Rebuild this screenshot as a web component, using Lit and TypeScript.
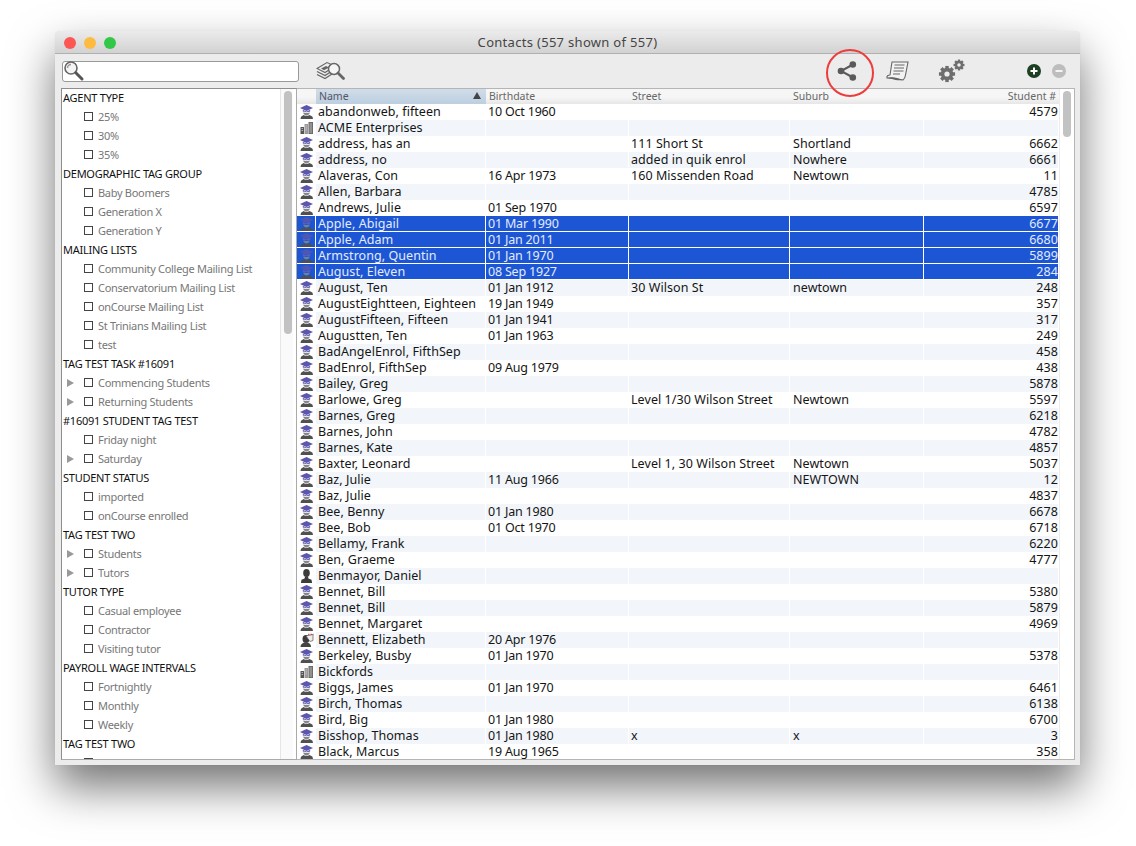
import { LitElement, html, css, svg, nothing } from "lit";
import { customElement } from "lit/decorators.js";

type Kind = "s" | "o" | "p" | "t";
type Contact = [Kind, string, string, string, string, string];

const CONTACTS: Contact[] = [
  ["s", "abandonweb, fifteen", "10 Oct 1960", "", "", "4579"],
  ["o", "ACME Enterprises", "", "", "", ""],
  ["s", "address, has an", "", "111 Short St", "Shortland", "6662"],
  ["s", "address, no", "", "added in quik enrol", "Nowhere", "6661"],
  ["s", "Alaveras, Con", "16 Apr 1973", "160 Missenden Road", "Newtown", "11"],
  ["s", "Allen, Barbara", "", "", "", "4785"],
  ["s", "Andrews, Julie", "01 Sep 1970", "", "", "6597"],
  ["s", "Apple, Abigail", "01 Mar 1990", "", "", "6677"],
  ["s", "Apple, Adam", "01 Jan 2011", "", "", "6680"],
  ["s", "Armstrong, Quentin", "01 Jan 1970", "", "", "5899"],
  ["s", "August, Eleven", "08 Sep 1927", "", "", "284"],
  ["s", "August, Ten", "01 Jan 1912", "30 Wilson St", "newtown", "248"],
  ["s", "AugustEightteen, Eighteen", "19 Jan 1949", "", "", "357"],
  ["s", "AugustFifteen, Fifteen", "01 Jan 1941", "", "", "317"],
  ["s", "Augustten, Ten", "01 Jan 1963", "", "", "249"],
  ["s", "BadAngelEnrol, FifthSep", "", "", "", "458"],
  ["s", "BadEnrol, FifthSep", "09 Aug 1979", "", "", "438"],
  ["s", "Bailey, Greg", "", "", "", "5878"],
  ["s", "Barlowe, Greg", "", "Level 1/30 Wilson Street", "Newtown", "5597"],
  ["s", "Barnes, Greg", "", "", "", "6218"],
  ["s", "Barnes, John", "", "", "", "4782"],
  ["s", "Barnes, Kate", "", "", "", "4857"],
  ["s", "Baxter, Leonard", "", "Level 1, 30 Wilson Street", "Newtown", "5037"],
  ["s", "Baz, Julie", "11 Aug 1966", "", "NEWTOWN", "12"],
  ["s", "Baz, Julie", "", "", "", "4837"],
  ["s", "Bee, Benny", "01 Jan 1980", "", "", "6678"],
  ["s", "Bee, Bob", "01 Oct 1970", "", "", "6718"],
  ["s", "Bellamy, Frank", "", "", "", "6220"],
  ["s", "Ben, Graeme", "", "", "", "4777"],
  ["p", "Benmayor, Daniel", "", "", "", ""],
  ["s", "Bennet, Bill", "", "", "", "5380"],
  ["s", "Bennet, Bill", "", "", "", "5879"],
  ["s", "Bennet, Margaret", "", "", "", "4969"],
  ["t", "Bennett, Elizabeth", "20 Apr 1976", "", "", ""],
  ["s", "Berkeley, Busby", "01 Jan 1970", "", "", "5378"],
  ["o", "Bickfords", "", "", "", ""],
  ["s", "Biggs, James", "01 Jan 1970", "", "", "6461"],
  ["s", "Birch, Thomas", "", "", "", "6138"],
  ["s", "Bird, Big", "01 Jan 1980", "", "", "6700"],
  ["s", "Bisshop, Thomas", "01 Jan 1980", "x", "x", "3"],
  ["s", "Black, Marcus", "19 Aug 1965", "", "", "358"],
];

const SELECTED = new Set([7, 8, 9, 10]);

// h = group heading, i = tag, e = tag with expander arrow
const TAGS: [string, string][] = [
  ["h", "AGENT TYPE"],
  ["i", "25%"],
  ["i", "30%"],
  ["i", "35%"],
  ["h", "DEMOGRAPHIC TAG GROUP"],
  ["i", "Baby Boomers"],
  ["i", "Generation X"],
  ["i", "Generation Y"],
  ["h", "MAILING LISTS"],
  ["i", "Community College Mailing List"],
  ["i", "Conservatorium Mailing List"],
  ["i", "onCourse Mailing List"],
  ["i", "St Trinians Mailing List"],
  ["i", "test"],
  ["h", "TAG TEST TASK #16091"],
  ["e", "Commencing Students"],
  ["e", "Returning Students"],
  ["h", "#16091 STUDENT TAG TEST"],
  ["i", "Friday night"],
  ["e", "Saturday"],
  ["h", "STUDENT STATUS"],
  ["i", "imported"],
  ["i", "onCourse enrolled"],
  ["h", "TAG TEST TWO"],
  ["e", "Students"],
  ["e", "Tutors"],
  ["h", "TUTOR TYPE"],
  ["i", "Casual employee"],
  ["i", "Contractor"],
  ["i", "Visiting tutor"],
  ["h", "PAYROLL WAGE INTERVALS"],
  ["i", "Fortnightly"],
  ["i", "Monthly"],
  ["i", "Weekly"],
  ["h", "TAG TEST TWO"],
  ["i", "Students"],
];

function rowIcon(kind: Kind) {
  let body;
  if (kind === "s") {
    body = svg`
      <path d="M6.500 1 13 4 6.500 7 0 4Z" fill="#5b57ad" />
      <path d="M2.800 5.800 6.500 7.400 10.200 5.800V7.600C9 8.400 4 8.400 2.800 7.600Z" fill="#6a66b5" />
      <path d="M3.200 8.500c.3 1.800 1.500 2.900 3.300 2.900s3-1.100 3.300-2.900c-1.800.6-4.800.6-6.600 0Z" fill="#85858c" />
      <path d="M3.600 11c1.400 1.200 4.400 1.200 5.800 0l1.600.8 1.500 1 .5 2.200H0.500l.5-2.200 1.500-1Z" fill="#505050" />`;
  } else if (kind === "o") {
    body = svg`
      <path d="M0.500 7h3.500v7H0.500Z" fill="#555" />
      <path d="M4.500 4h3.500v10H4.500Z" fill="#9a9a9a" />
      <path d="M8.500 2h4.500v12H8.500Z" fill="#6a6a6a" />
      <path d="M1.500 8.500h1.500M1.500 10.500h1.500M5.500 6h1.500M5.500 8h1.500M5.500 10h1.500M9.500 4h2.500M9.500 6h2.500M9.500 8h2.500M9.500 10h2.500M9.500 12h2.500" stroke="#ccc" stroke-width=".8" />`;
  } else if (kind === "p") {
    body = svg`
      <ellipse cx="6.500" cy="5" rx="3.300" ry="4" fill="#3c3c3c" />
      <path d="M5 8.500h3l.4 2 3.100 1.200.6 3.300H.9l.6-3.300 3.100-1.200Z" fill="#3c3c3c" />`;
  } else {
    body = svg`
      <ellipse cx="6" cy="7" rx="3.500" ry="4" fill="#3c3c3c" />
      <path d="M.500 15c0-3 2-4.500 5.500-4.500s5 1.500 5 4.500Z" fill="#444" />
      <path d="M6 4 13 2.500v6l-3 1Z" fill="#eee" stroke="#555" stroke-width=".7" />
      <path d="M8 2.300h5.500" stroke="#d33" stroke-width="1" stroke-dasharray="1.500 1" />`;
  }
  return html`<svg class="row-icon" width="14" height="16" viewBox="0 0 14 16">${body}</svg>`;
}

const glass = html`<svg class="glass" width="22" height="22" viewBox="0 0 22 22">
  <circle cx="8" cy="8" r="6" fill="#f4f4f4" stroke="#666" stroke-width="1.600" />
  <path d="M4.500 8a3.500 3.500 0 0 1 3.500-3.500" fill="none" stroke="#999" stroke-width="1.500" />
  <path d="M12.800 12.800 19 19" stroke="#555" stroke-width="3" stroke-linecap="round" />
</svg>`;

const findIcon = html`<svg width="30" height="22" viewBox="0 0 30 22">
  <path d="M1 8.500 11 2.500 19 6 9 12.500Z" fill="#eee" stroke="#666" stroke-width="1.100" />
  <path d="M1 11.500 9 15.500 16 11M1 14.500 9 18.500 16 14" fill="none" stroke="#666" stroke-width="1.300" />
  <path d="M5 8.500 10 6l3 1.500-5 2.800Z" fill="#666" />
  <circle cx="18" cy="9" r="5.500" fill="#f6f6f6" stroke="#666" stroke-width="1.500" />
  <path d="M22 13 27.500 18.500" stroke="#666" stroke-width="2.800" stroke-linecap="round" />
</svg>`;

const shareIcon = html`<svg width="22" height="22" viewBox="0 0 22 22">
  <path d="M17 4.500 5 11l12 6.500" fill="none" stroke="#5a5a5a" stroke-width="2" />
  <circle cx="16.800" cy="4.500" r="3.300" fill="#5a5a5a" />
  <circle cx="5" cy="11" r="3.300" fill="#5a5a5a" />
  <circle cx="16.800" cy="17.500" r="3.300" fill="#5a5a5a" />
</svg>`;

const scriptIcon = html`<svg width="24" height="22" viewBox="0 0 24 22">
  <path d="M6 2h16l-2.500 13c-.3 2 -1 4-2.500 5L6 18 1 18c-.5-2 1-3 3-3Z" fill="#f2f2f2" stroke="#666" stroke-width="1.100" />
  <path d="M1 18c3-1 7-1 10 0 2 .7 4 1.500 6 2-4 .6-8 0-11-1-2-.6-3.500-.6-5-1Z" fill="#666" />
  <path d="M8.500 5h10M8 8h10M7.500 11h10M7 14h7" stroke="#666" stroke-width="1.200" />
</svg>`;

function gear(cx: number, cy: number, r: number) {
  const teeth = [0, 45, 90, 135].map(
    (a) => svg`<rect x=${cx - r * 0.28} y=${cy - r * 1.3} width=${r * 0.56} height=${r * 2.6} transform="rotate(${a} ${cx} ${cy})" />`
  );
  return svg`<g fill="#6e6e6e">${teeth}<circle cx=${cx} cy=${cy} r=${r} /></g>
    <circle cx=${cx} cy=${cy} r=${r * 0.42} fill="#eee" />`;
}

const gearsIcon = html`<svg width="28" height="24" viewBox="0 0 28 24">
  ${gear(9, 15, 6.2)}${gear(21, 6, 4.2)}
</svg>`;

const plusIcon = html`<svg width="14" height="14" viewBox="0 0 14 14">
  <circle cx="7" cy="7" r="7" fill="#1c4022" />
  <path d="M7 3.500v7M3.500 7h7" stroke="#fff" stroke-width="2" />
</svg>`;

const minusIcon = html`<svg width="14" height="14" viewBox="0 0 14 14">
  <circle cx="7" cy="7" r="7" fill="#bdbdbd" />
  <path d="M3.500 7h7" stroke="#f4f4f4" stroke-width="2" />
</svg>`;

@customElement("app-root")
export class AppRoot extends LitElement {
  static styles = css`
    :host {
      display: block;
      height: 846px;
      box-sizing: border-box;
      padding: 31px 56px 0 55px;
      background: #fff;
      font-family: "Noto Sans", sans-serif;
      overflow: hidden;
    }
    .window {
      position: relative;
      height: 734px;
      display: flex;
      flex-direction: column;
      background: #ececec;
      border-radius: 5px 5px 0 0;
      box-shadow: 0 22px 45px rgba(0, 0, 0, 0.55), 0 0 1px rgba(0, 0, 0, 0.15);
    }
    .titlebar {
      height: 22px;
      flex: none;
      display: flex;
      align-items: center;
      justify-content: center;
      position: relative;
      border-radius: 5px 5px 0 0;
      background: linear-gradient(#ebebeb, #d2d2d2);
      border-bottom: 1px solid #b0b0b0;
      font-size: 13px;
      letter-spacing: 0.3px;
      color: #454545;
    }
    .lights {
      position: absolute;
      left: 9px;
      top: 6px;
      display: flex;
      gap: 8px;
    }
    .light {
      width: 12px;
      height: 12px;
      border-radius: 50%;
    }
    .red { background: #fc5753; }
    .yellow { background: #fdbc40; }
    .green { background: #33c748; }
    .toolbar {
      height: 34px;
      flex: none;
      display: flex;
      align-items: center;
    }
    .search {
      margin-left: 7px;
      width: 235px;
      height: 19px;
      border: 1px solid #999;
      border-radius: 3px;
      background: #fff;
      display: flex;
      align-items: center;
    }
    .tool {
      display: flex;
      align-items: center;
      justify-content: center;
    }
    .find { margin-left: 17px; }
    .share { margin-left: 490px; }
    .script { margin-left: 28px; }
    .gears { margin-left: 28px; }
    .plus { margin-left: 61px; }
    .minus { margin-left: 11px; }
    .ring {
      position: absolute;
      left: 771px;
      top: 18px;
      width: 44px;
      height: 44px;
      border: 2px solid #ee3b3b;
      border-radius: 50%;
      pointer-events: none;
    }
    .panes {
      flex: 1;
      min-height: 0;
      display: flex;
      padding: 0 5px 5px 6px;
    }
    .tags {
      width: 236px;
      flex: none;
      box-sizing: border-box;
      border: 1px solid #8e8e8e;
      border-right-color: #aaa;
      border-bottom-color: #aaa;
      background: #fff;
      overflow: hidden;
      display: flex;
    }
    .tag-list {
      flex: 1;
      min-width: 0;
      margin-top: -1px;
    }
    .tag-row {
      height: 19px;
      display: flex;
      align-items: center;
      font-size: 11px;
      color: #777;
      white-space: nowrap;
      letter-spacing: -0.3px;
    }
    .tag-row.head {
      color: #111;
      padding-left: 1px;
      letter-spacing: -0.25px;
    }
    .arrow {
      width: 0;
      height: 0;
      margin-left: 5px;
      border-left: 7px solid #999;
      border-top: 4.500px solid transparent;
      border-bottom: 4.500px solid transparent;
    }
    .arrow-gap {
      width: 22px;
      flex: none;
      display: flex;
      align-items: center;
    }
    .check {
      width: 7px;
      height: 7px;
      border: 1px solid #444;
      background: #fff;
      margin-right: 5px;
      flex: none;
    }
    .tag-track {
      width: 13px;
      flex: none;
      box-sizing: border-box;
      border-left: 1px solid #e6e6e6;
      background: #fafafa;
      padding: 2px 0 0 3px;
      margin-right: 3px;
    }
    .thumb {
      width: 8px;
      border-radius: 4px;
      background: #c2c2c2;
    }
    .contacts {
      flex: 1;
      min-width: 0;
      box-sizing: border-box;
      border: 1px solid #b5b5b5;
      border-left: none;
      background: #fff;
      display: flex;
      overflow: hidden;
    }
    .table {
      width: 762px;
      flex: none;
    }
    .cols {
      display: grid;
      grid-template-columns: 19px 170px 143px 161px 134px 135px;
    }
    .header {
      height: 15px;
      font-size: 10.500px;
      color: #666;
      background: linear-gradient(#f6f6f6 55%, #e6e6e6);
    }
    .header > div {
      box-sizing: border-box;
      display: flex;
      align-items: center;
      padding: 0 3px 2px;
      overflow: hidden;
      position: relative;
    }
    .header .sorted {
      background: linear-gradient(#cfdbe8 10%, #bccfe0);
      color: #556;
    }
    .header .right { justify-content: flex-end; }
    .sort {
      position: absolute;
      right: 5px;
      top: 3px;
      width: 0;
      height: 0;
      border-left: 4px solid transparent;
      border-right: 4px solid transparent;
      border-bottom: 7px solid #444;
    }
    .row {
      height: 16px;
      font-size: 12.500px;
      line-height: 15px;
      letter-spacing: 0.06px;
      color: #151515;
      white-space: nowrap;
    }
    .row > div {
      box-sizing: border-box;
      padding: 0 2px;
      overflow: hidden;
      border-right: 1px solid #fff;
      border-bottom: 1px solid transparent;
    }
    .row .icon-cell {
      padding: 0 0 0 3px;
    }
    .row .date {
      letter-spacing: -0.2px;
    }
    .row .suburb {
      padding-left: 3px;
    }
    .row.odd > div:not(.icon-cell) {
      background: #f2f5fa;
    }
    .row.sel > div,
    .row.sel.odd > div:not(.icon-cell) {
      background: #1c56d4;
      border-bottom-color: #fff;
      color: #e4ebfb;
    }
    .row.sel .row-icon {
      opacity: 0.85;
    }
    .row .num {
      text-align: right;
      padding-right: 0;
    }
    .row-icon {
      display: block;
    }
    .table-track {
      flex: 1;
      border-left: 1px solid #ececec;
      padding: 2px 0 0 3px;
    }
  `;

  private renderTag(tag: [string, string]) {
    const [type, label] = tag;
    if (type === "h") return html`<div class="tag-row head">${label}</div>`;
    return html`<div class="tag-row">
      <span class="arrow-gap">${type === "e" ? html`<span class="arrow"></span>` : nothing}</span>
      <span class="check"></span>${label}
    </div>`;
  }

  private renderRow(c: Contact, i: number) {
    const cls = `row cols${i % 2 ? " odd" : ""}${SELECTED.has(i) ? " sel" : ""}`;
    return html`<div class=${cls}>
      <div class="icon-cell">${rowIcon(c[0])}</div>
      <div>${c[1]}</div>
      <div class="date">${c[2]}</div>
      <div>${c[3]}</div>
      <div class="suburb">${c[4]}</div>
      <div class="num">${c[5]}</div>
    </div>`;
  }

  render() {
    return html`
      <div class="window">
        <div class="titlebar">
          <div class="lights">
            <span class="light red"></span>
            <span class="light yellow"></span>
            <span class="light green"></span>
          </div>
          Contacts (557 shown of 557)
        </div>
        <div class="toolbar">
          <div class="search">${glass}</div>
          <span class="tool find">${findIcon}</span>
          <span class="tool share">${shareIcon}</span>
          <span class="tool script">${scriptIcon}</span>
          <span class="tool gears">${gearsIcon}</span>
          <span class="tool plus">${plusIcon}</span>
          <span class="tool minus">${minusIcon}</span>
        </div>
        <div class="ring"></div>
        <div class="panes">
          <div class="tags">
            <div class="tag-list">${TAGS.map((t) => this.renderTag(t))}</div>
            <div class="tag-track"><div class="thumb" style="height:243px"></div></div>
          </div>
          <div class="contacts">
            <div class="table">
              <div class="header cols">
                <div></div>
                <div class="sorted">Name<span class="sort"></span></div>
                <div>Birthdate</div>
                <div>Street</div>
                <div>Suburb</div>
                <div class="right">Student #</div>
              </div>
              ${CONTACTS.map((c, i) => this.renderRow(c, i))}
            </div>
            <div class="table-track"><div class="thumb" style="height:46px"></div></div>
          </div>
        </div>
      </div>
    `;
  }
}

declare global {
  interface HTMLElementTagNameMap {
    "app-root": AppRoot;
  }
}
